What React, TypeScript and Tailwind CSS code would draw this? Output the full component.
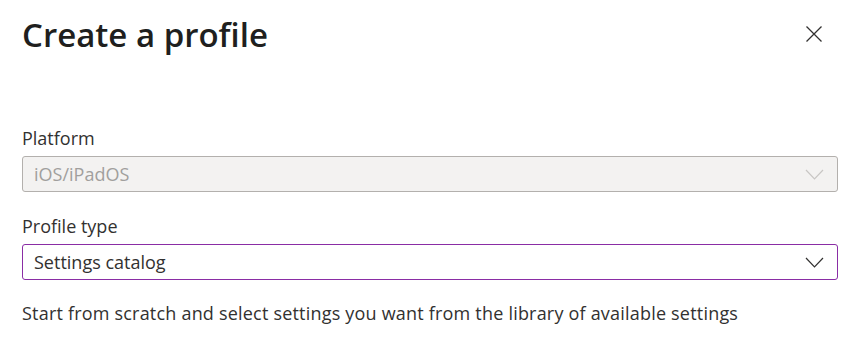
export default function App() {
    return (
        <div className="w-[853px] h-[364px] bg-white text-[#323130] pl-[22px] pr-[15px] pt-[14px]" style={{ fontFamily: '"Segoe UI", "Open Sans", "Noto Sans", sans-serif' }}>
            <div className="flex justify-between items-start">
                <h1 className="text-[33px] font-semibold leading-[42px] text-[#201f1e]">Create a profile</h1>
                <button className="mt-[12px] mr-[16px] w-[16px] h-[16px] flex items-center justify-center">
                    <svg width="16" height="16" viewBox="0 0 16 16" fill="none" stroke="#323130" strokeWidth="1.3">
                        <path d="M0.5 0.5L15.5 15.5M15.5 0.5L0.5 15.5" />
                    </svg>
                </button>
            </div>
            <div className="mt-[70px]">
                <label className="block text-[18px] leading-[24px]">Platform</label>
                <div className="mt-[6px] h-[36px] flex items-center justify-between border border-[#b3b0ad] bg-[#f3f2f1] rounded-[3px] pl-[11px] pr-[13px]">
                    <span className="text-[18px] text-[#a19f9d]">iOS/iPadOS</span>
                    <svg width="19" height="11" viewBox="0 0 19 11" fill="none" stroke="#c8c6c4" strokeWidth="1.2">
                        <path d="M1 1L9.5 10L18 1" />
                    </svg>
                </div>
                <label className="block mt-[22px] text-[18px] leading-[24px]">Profile type</label>
                <div className="mt-[6px] h-[36px] flex items-center justify-between border border-[#8a2da5] bg-white rounded-[3px] pl-[11px] pr-[13px]">
                    <span className="text-[18px]">Settings catalog</span>
                    <svg width="19" height="11" viewBox="0 0 19 11" fill="none" stroke="#323130" strokeWidth="1.2">
                        <path d="M1 1L9.5 10L18 1" />
                    </svg>
                </div>
                <p className="mt-[21px] text-[18px] leading-[24px] tracking-[0.2px]">Start from scratch and select settings you want from the library of available settings</p>
            </div>
        </div>
    )
}
